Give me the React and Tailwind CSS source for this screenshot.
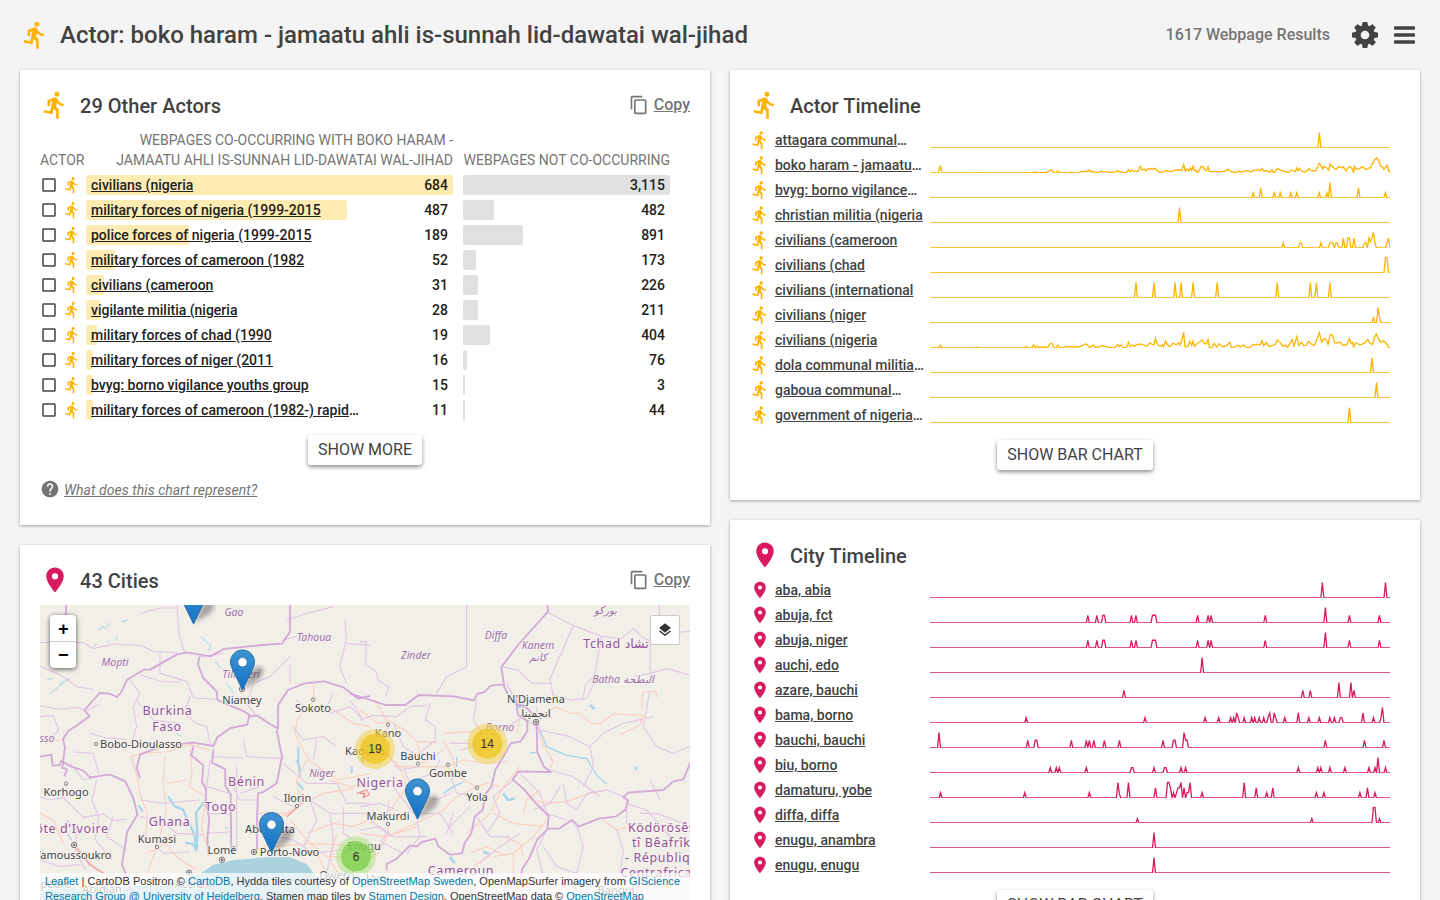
import React from "react";
import {
  MdDirectionsRun,
  MdContentCopy,
  MdHelp,
  MdPlace,
  MdCheckBoxOutlineBlank,
  MdLayers,
} from "react-icons/md";

const ACTORS = [
  ["civilians (nigeria", "684", 367, "3,115", 207],
  ["military forces of nigeria (1999-2015", "487", 261, "482", 31],
  ["police forces of nigeria (1999-2015", "189", 103, "891", 60],
  ["military forces of cameroon (1982", "52", 29, "173", 13],
  ["civilians (cameroon", "31", 18, "226", 15],
  ["vigilante militia (nigeria", "28", 14, "211", 15],
  ["military forces of chad (1990", "19", 11, "404", 27],
  ["military forces of niger (2011", "16", 7, "76", 4],
  ["bvyg: borno vigilance youths group", "15", 7, "3", 2],
  ["military forces of cameroon (1982-) rapid…", "11", 7, "44", 2],
];

// Dense series: x and height in thirds of a pixel.
const BOKO_LINE =
  "0,0 25,1 31,22 36,0 135,0 139,1 143,0 155,0 160,1 165,0 280,0 286,2 295,0 306,0 311,3 315,0 320,3 325,0 330,1 350,2 356,6 364,10 368,6 371,1 377,0 383,6 390,0 405,1 415,0 424,3 432,0 445,0 452,4 464,4 470,6 474,4 478,9 484,3 490,4 500,1 508,3 514,6 520,3 530,4 540,1 550,3 558,4 563,7 567,3 573,4 580,1 590,1 595,10 600,4 605,9 612,5 625,5 631,20 636,9 644,12 648,6 654,12 668,12 676,14 682,6 690,1 " +
  "700,3 708,8 714,5 726,5 738,9 748,9 755,8 761,25 766,6 771,12 776,7 781,15 785,8 789,20 793,7 798,9 802,0 808,8 813,19 818,20 824,10 829,7 834,19 838,5 846,4 858,4 868,3 875,5 883,5 890,9 898,9 905,3 918,1 925,6 935,3 945,7 955,6 962,3 970,8 978,8 985,9 990,6 996,14 1001,6 1010,7 1020,2 1026,9 1030,1 1036,4 1042,14 1052,8 1063,5 1075,1 1084,9 1090,6 1096,4 1100,15 1104,7 1109,14 1116,5 1124,2 1132,8 1137,14 1142,8 1150,6 1158,8 1163,19 1168,29 1174,20 1178,12 1182,20 1190,16 1196,8 1200,27 1206,20 1213,14 1220,12 1226,20 1235,15 1240,19 1248,6 1254,16 1260,20 1268,10 1271,0 1273,20 1280,11 1290,14 1298,19 1308,10 1316,15 1322,16 1327,27 1334,40 1340,45 1346,37 1352,20 1358,18 1362,11 1368,19 1371,24 1374,14 1377,4 1380,8";
const NIGERIA_LINE =
  "0,0 25,0 31,9 36,0 135,0 139,3 145,0 282,0 289,5 295,0 306,0 311,9 316,1 321,6 326,2 335,3 345,3 353,1 359,12 366,14 371,2 378,0 383,9 390,1 400,0 407,5 415,3 425,5 432,1 440,4 447,3 " +
  "460,9 468,13 472,9 478,2 485,5 490,9 495,2 505,3 514,7 525,5 533,3 543,1 553,1 563,10 568,4 573,9 580,1 590,1 595,17 600,5 607,9 614,5 620,10 631,12 640,9 650,5 660,15 667,11 672,10 676,29 681,14 686,7 693,5 697,10 701,4 707,21 711,11 718,5 722,5 728,14 734,12 739,10 745,15 750,9 754,17 761,47 765,4 774,5 779,20 785,8 789,20 793,5 801,13 812,20 816,24 823,14 829,12 834,25 838,2 846,1 852,14 860,3 867,13 875,5 887,5 895,13 900,17 904,1 914,3 923,9 931,4 941,9 950,2 960,1 969,11 977,8 982,12 990,9 996,22 1001,6 1009,16 1017,4 1029,8 1036,11 1042,24 1050,17 1058,6 1067,8 1073,2 1086,25 1092,5 1100,34 1107,8 1114,17 1121,7 1129,8 1136,20 1144,12 1153,8 1161,27 1168,46 1175,18 1183,28 1189,25 1194,11 1201,40 1208,38 1214,16 1222,15 1231,18 1238,9 1250,9 1258,28 1264,13 1268,17 1271,3 1278,15 1288,10 1296,11 1305,16 1313,26 1320,14 1328,10 1333,30 1339,42 1345,28 1353,16 1361,22 1370,12 1375,3 1380,2";

const ABUJA =
  "105:.5 111:.5 115:.5 116:.5 134:.5 137:.5 148:.5 149:.5 150:.5 178:.5 185:.5 187:.5 223:.5 263:1 279:.5 299:.5";

// Sparse series: month index and share of the full height.
const ACTOR_LINES = [
  ["attagara communal", true, "259:1"],
  ["boko haram - jamaatu", true, null, BOKO_LINE],
  ["bvyg: borno vigilance", true, "215:.33 220:.65 229:.33 233:.33 240:.33 244:.33 259:.33 264:.33 266:1 285:.65 303:.33"],
  ["christian militia (nigeria", false, "166:1"],
  ["civilians (cameroon", false, "235:.33 246:.33 247:.33 260:.33 266:.33 267:.33 268:.33 270:.33 271:.33 275:.65 278:.65 279:.65 282:.65 289:.33 290:.33 292:.65 293:.4 294:.65 295:1 296:.35 304:.35 305:.65"],
  ["civilians (chad", false, "303:1 304:1"],
  ["civilians (international", false, "137:1 149:1 163:1 167:1 175:1 191:1 231:1 253:1 257:1 266:1"],
  ["civilians (niger", false, "295:.33 298:1 299:.33"],
  ["civilians (nigeria", false, null, NIGERIA_LINE],
  ["dola communal militia", true, "294:1"],
  ["gaboua communal", true, "297:1"],
  ["government of nigeria", true, "279:1"],
];

const CITY_LINES = [
  ["aba, abia", false, "261:1 303:1"],
  ["abuja, fct", false, ABUJA],
  ["abuja, niger", false, ABUJA],
  ["auchi, edo", false, "181:1"],
  ["azare, bauchi", false, "129:.5 248:.5 253:.5 272:1 280:1 282:.5"],
  ["bama, borno", false, "64:.35 143:.35 183:.35 192:.35 200:.35 202:.35 204:.65 205:.35 209:.35 214:.35 216:.35 219:.35 222:.35 225:.4 226:.65 229:.65 230:.3 236:.35 245:.65 252:.35 259:.35 266:.35 269:.35 273:.35 274:.35 288:.65 295:.35 300:.35 301:1"],
  ["bauchi, bauchi", false, "6:1 65:.5 70:.5 71:.5 94:.5 104:.5 106:.5 109:.5 116:.5 126:.5 155:.5 162:.5 163:.5 169:1 170:.5 171:.5 263:.5 289:.5 302:.5"],
  ["biu, borno", false, "80:.35 84:.35 86:.35 104:.35 134:.35 135:.35 149:.35 156:.35 157:.35 167:.35 170:.35 245:.35 258:.35 260:.35 266:.35 276:.35 292:.35 296:.35 298:1 303:.35"],
  ["damaturu, yobe", false, "7:.35 63:.35 106:.35 125:1 126:.25 132:1 150:.65 158:1 159:1 160:.65 162:.35 164:.35 165:.65 166:.65 167:1 169:.65 171:.35 172:.35 173:1 181:.35 209:1 217:.65 224:.35 228:.65 257:.35 262:.35 286:.35 291:.65 296:.35"],
  ["diffa, diffa", false, "138:.28 254:.28 295:1 296:1 299:.28"],
  ["enugu, anambra", false, "149:1"],
  ["enugu, enugu", false, "149:1"],
];

const SPARK_BASE = 18;
const SPARK_PEAK = 15.5;

function sparsePoints(spec) {
  const values = new Array(307).fill(0);
  spec.split(" ").forEach((pair) => {
    const [i, v] = pair.split(":");
    values[Number(i)] = Number(v);
  });
  return values.map((v, i) => `${((i * 460) / 306).toFixed(2)},${(SPARK_BASE - v * SPARK_PEAK).toFixed(2)}`).join(" ");
}

function densePoints(spec) {
  return spec
    .trim()
    .split(/\s+/)
    .map((pair) => {
      const [x, h] = pair.split(",").map(Number);
      return `${(x / 3).toFixed(2)},${(SPARK_BASE - h / 3).toFixed(2)}`;
    })
    .join(" ");
}

function Sparkline({ sparse, dense, className }) {
  return (
    <svg className={`block h-[18px] w-[460px] shrink-0 overflow-hidden ${className}`} viewBox="0 0 460 18" fill="none">
      <polyline points={sparse ? sparsePoints(sparse) : densePoints(dense)} stroke="currentColor" strokeWidth="1.3" />
    </svg>
  );
}

function Button({ children }) {
  return (
    <button className="h-[30px] rounded-[3px] bg-white px-[10px] text-[16px] leading-[30px] text-[#424242] shadow-[0_2px_4px_rgba(0,0,0,0.45)]">
      {children}
    </button>
  );
}

function Card({ children, className }) {
  return <section className={`bg-white px-5 pt-5 shadow-[0_1px_3px_rgba(0,0,0,0.35)] ${className}`}>{children}</section>;
}

function CardHeader({ icon: Icon, iconClass, title, copy }) {
  return (
    <div className="flex h-[30px] items-center">
      <Icon className={`size-[30px] ${iconClass}`} />
      <h2 className="ml-[10px] flex-1 pt-px text-[20px] font-medium leading-[30px] tracking-[0.02px] text-[#424242]">{title}</h2>
      {copy && (
        <a className="flex items-center gap-[5px] text-[16px] font-medium text-[#757575]">
          <MdContentCopy className="size-5" />
          <span className="underline">Copy</span>
        </a>
      )}
    </div>
  );
}

function Timeline({ rows, icon: Icon, colorClass }) {
  return (
    <div className="mt-[10px] flex flex-col gap-[5px]">
      {rows.map(([name, cut, sparse, dense]) => (
        <div key={name} className="flex h-5 items-start">
          <Icon className={`size-5 shrink-0 ${colorClass}`} />
          <div className="ml-[5px] w-[155px] shrink-0 whitespace-nowrap text-[14px] font-medium leading-5 text-[#424242]">
            <a className="underline">{name}</a>
            {cut && "…"}
          </div>
          <Sparkline sparse={sparse} dense={dense} className={colorClass} />
        </div>
      ))}
    </div>
  );
}

function ActorsCard() {
  return (
    <Card className="h-[455px]">
      <CardHeader icon={MdDirectionsRun} iconClass="text-[#ffb300]" title="29 Other Actors" copy />
      <div className="mt-[10px] flex h-10 items-end text-[14px] leading-5 text-[#757575]">
        <div className="w-[46px]">ACTOR</div>
        <div className="w-[367px] text-right">
          WEBPAGES CO-OCCURRING WITH BOKO HARAM -<br />
          JAMAATU AHLI IS-SUNNAH LID-DAWATAI WAL-JIHAD
        </div>
        <div className="ml-[10px] w-[207px] whitespace-nowrap text-right">WEBPAGES NOT CO-OCCURRING</div>
      </div>
      <div className="mt-[5px] flex flex-col gap-[5px]">
        {ACTORS.map(([name, a, aw, b, bw]) => {
          const cut = name.endsWith("…");
          return (
            <div key={name} className="flex h-5 items-center text-[14px] font-medium leading-5 text-[#212121]">
              <MdCheckBoxOutlineBlank className="size-[18px] text-[#424242]" />
              <MdDirectionsRun className="ml-[5px] mr-[5px] size-[18px] text-[#ffb300]" />
              <div className="grid w-[367px]">
                <div className="col-start-1 row-start-1 h-5 rounded-[2px] bg-[#ffecb3]" style={{ width: aw }} />
                <div className="col-start-1 row-start-1 flex justify-between px-[5px]">
                  <span>
                    <a className="underline">{cut ? name.slice(0, -1) : name}</a>
                    {cut && "…"}
                  </span>
                  <span>{a}</span>
                </div>
              </div>
              <div className="ml-[10px] grid w-[207px]">
                <div className="col-start-1 row-start-1 h-5 rounded-[2px] bg-[#e0e0e0]" style={{ width: bw }} />
                <div className="col-start-1 row-start-1 px-[5px] text-right">{b}</div>
              </div>
            </div>
          );
        })}
      </div>
      <div className="mt-[15px] flex justify-center">
        <Button>SHOW MORE</Button>
      </div>
      <div className="mt-[15px] flex h-5 items-center gap-[4px] text-[#757575]">
        <MdHelp className="mb-[2px] size-5" />
        <a className="text-[14px] italic leading-5 tracking-[0.045px] underline">What does this chart represent?</a>
      </div>
    </Card>
  );
}

function Marker({ x, y }) {
  return (
    <g transform={`translate(${x - 12.5} ${y - 41})`}>
      <path d="M13 40L22 21q6-6 10-3t-3 12z" fill="#000" opacity=".3" filter="url(#soft)" />
      <path
        d="M12.5.5C5.9.5.5 5.9.5 12.500c0 2.400.8 4.800 2 7.300L12.500 40.500l10-20.700c1.200-2.500 2-4.900 2-7.300C24.500 5.900 19.100.5 12.500.5z"
        fill="url(#pin)"
        stroke="#2a6fa8"
      />
      <circle cx="12.5" cy="12.700" r="4.600" fill="#fff" stroke="#2a6fa8" strokeWidth=".6" />
    </g>
  );
}

function Cluster({ x, y, n, outer, inner }) {
  return (
    <g>
      <circle cx={x} cy={y} r="20" fill={outer} fillOpacity=".6" />
      <circle cx={x} cy={y} r="15" fill={inner} fillOpacity=".65" />
      <text x={x} y={y + 4.3} textAnchor="middle" fontSize="12" fill="#333" fontFamily="'Liberation Sans', Arial, sans-serif">
        {n}
      </text>
    </g>
  );
}

// Label: text, x (centre), baseline y, kind, optional anchor.
const LABELS = [
  ["Gao", 194, 11, "r"], ["Tahoua", 274, 35.500, "r"], ["Mopti", 75, 60.500, "r"], ["Tillabéri", 201, 72.500, "r"],
  ["Niger", 282, 172, "r"], ["sso", 7, 137, "r"], ["Zinder", 376, 54, "r"], ["Diffa", 456, 34, "r"],
  ["Kanem", 498, 44, "r"], ["كانم", 498, 56, "r"], ["بوركو", 565, 8.500, "r"], ["Borno", 460, 126, "r"],
  ["Batha البطحة", 583, 77.500, "r"],
  ["Burkina", 127.500, 110, "c"], ["Faso", 127, 125.500, "c"], ["Bénin", 206.500, 180.500, "c"], ["Togo", 180.500, 205.500, "c"],
  ["Ghana", 129.500, 220.500, "c"], ["ôte d'Ivoire", 32, 227.500, "c"], ["Nigeria", 340, 182, "c"],
  ["Tchad تشاد", 576, 43, "c"], ["Cameroun", 421, 270, "c"], ["Ködörösês", 588, 226.500, "c", "start"],
  ["tî Bêafrîka", 592, 242, "c", "start"], ["- République", 585, 257, "c", "start"], ["Centrafricaine", 580.500, 272, "c", "start"],
  ["Niamey", 202, 99, "t"], ["Sokoto", 273, 107, "t"], ["Bobo-Dioulasso", 101, 143, "t"],
  ["Korhogo", 26, 191, "t"], ["Kumasi", 117, 237.500, "t"], ["Yamoussoukro", 33, 253.500, "t"], ["Lomé", 182, 249, "t"],
  ["Porto-Novo", 249.500, 250.500, "t"], ["Abeokuta", 230, 227.500, "t"], ["Ilorin", 257.500, 197, "t"],
  ["Kaduna", 325, 150, "t"], ["Kano", 348, 131.500, "t"], ["Bauchi", 378, 155, "t"], ["Gombe", 408, 172, "t"],
  ["Yola", 437, 195.500, "t"], ["Makurdi", 348, 214.500, "t"], ["Enugu", 324, 244.500, "t"],
  ["N'Djamena", 496, 97.500, "t"], ["انجمينا", 496, 112, "t"], ["Accra", 149, 283, "t"], ["Abidjan", 62, 288, "t"],
  ["Owerri", 297, 274, "t"], ["Uyo", 336, 277, "t"], ["Bangui", 576, 289, "t"], ["pedro", 16, 283, "t"],
];

const LABEL_CLASS = {
  r: "fill-[#9b6fa6] text-[10.5px] italic",
  c: "fill-[#94519b] text-[12.5px] tracking-[0.6px]",
  t: "fill-[#444] text-[11px] tracking-[0.05px]",
};

const TOWNS_WEST = [[198, 432], [108, 551], [381, 741], [849, 299], [801, 618], [998, 478]];
const TOWNS_EAST = [[84, 374], [174, 491], [264, 494], [351, 563], [84, 672]];

function MapDrawing() {
  return (
    <svg className="block h-[340px] w-[650px]" viewBox="0 0 650 340">
      <defs>
        <linearGradient id="pin" x1="0" y1="0" x2="0" y2="1">
          <stop offset="0" stopColor="#3f95d0" />
          <stop offset="1" stopColor="#126fc6" />
        </linearGradient>
        <filter id="soft" x="-40%" y="-40%" width="180%" height="180%">
          <feGaussianBlur stdDeviation="2" />
        </filter>
      </defs>
      <rect width="650" height="340" fill="#f2efe9" />

      {/* western half */}
      <g transform="translate(-10 -5) scale(.33333)" fill="none" strokeLinejoin="round">
        <path
          d="M30 872l80-10 90 14 80-14 110-10 60-10 60-20 40-28 60-14 100-8 70 0 50 20 30 40 20 60 30 20v130H30z"
          fill="#aad3df"
        />
        <g stroke="#a5d5e8" strokeWidth="4">
          <path d="M205 90l12-10 10 6 12-18M230 130l8-8M256 122l6-12M275 66l20-6M190 140l10-8M60 280l40-30M90 250l30-14M50 240l20-6" strokeWidth="3" />
          <path d="M555 185l20 22M512 110l30 26-6 16M590 250l20 30M440 400l14 8" strokeWidth="3" />
          <path d="M805 440v50l6 40M800 480l12 30M965 500v20M800 545l20 25M326 615l12 20" strokeWidth="6" />
          <path d="M415 590l20 30 24 8 14 34 20 40 6 50-10-20-24-4M528 598l-30 40 4 60-2 50" strokeWidth="7" />
          <path d="M105 690l20 30M585 680l6 8" />
        </g>
        <g stroke="#fbd0bf" strokeWidth="3.500">
          <path d="M300 470l50-12 60-2 70-22 60 18M305 470l16 60 10 56 20 50-4 80 34 20M405 470l-6 80 10 80-20 80 50 60 60 40M480 440l6 80-8 40 50 30-14 90 20 70M410 550l60-10M350 760l60-30M380 740l-30 90" />
          <path d="M851 250v50l-50 60-6 40 40 80 90 60 96-20M870 320l40 10 60 40 50 10M830 480l-30 60 14 80M900 540l60 20 60-6M690 640l90 0 40-30 60-30 90-14M800 620l-60 40-40 90M780 660l50 60 60 50 80 0 50-20M830 700l80-30 60 10 50-20M860 760l30 60-10 80M920 700l-20 80 30 50M730 740l110-10 180 10" />
          <path d="M30 640l40 20 30 70M140 740l60 70 40 20M30 420h70" />
        </g>
        <path d="M140 745l40 50 40 24M770 650l30-26M980 580l30-10 8 14-20 10" stroke="#ef9a9f" strokeWidth="4" />
        <g stroke="#e2c8e4" strokeWidth="3.500">
          <path d="M440 15l8 90 16 54M30 128h130l30 18 60-14 80 4 40 18 70 4M330 40l60-16 50 0" />
          <path d="M30 200l60 24 50 36 50 8M30 318l60 10 50-6 30 10 40-20M30 350l40-4 16 44-40 40M300 240l30 40-20 40 10 60-20 60M330 225l60 18 60 4M390 160l0 60 80 24 20 50 70 4M480 290l-20 50 40 30 30 10 10 50M320 300l50 60 80 10M180 400l50 14 60 4" />
          <path d="M130 456l60 4 16 60M120 490l40 50 40-10M30 590l30 10 40-8 60 60 60-10 30 20 40-4M200 540l-14 60 20 50-10 70 50 60M110 660l30 30-4 60 30 60M30 780l60 20 60-6M250 650l-20 60 60 40" />
          <path d="M510 170l70-10M760 120l40-10M770 60l60-20 80-20M945 60l4 60-20 80 20 50M780 170l-60 60-50 20-20 60 30 40M950 130l70 6M780 190l0 60M640 420l10 50 110 6M550 470l90 4" />
          <path d="M330 600l70 10 110-10M330 650l60 10 50 40 80 4M340 700l60 60 80-4M540 480l-10 80M610 560l20 40 50 0M690 560l-60 20M690 640l50 50M530 560l70 20M535 640l65 4M530 700l70-4M620 500l0 260M790 380l30 40 60-10 40 30M760 490l70 60 90 0 30 60 70 0M730 590l60 30 50-20 60 40 120 0M840 600l20 60-40 80M900 640l10 80-20 100M940 620l0 80 60 40M700 700l90 20 60 40 80-10 90 30M860 420l-10 60M900 340l60-20 40 40M800 300l30 30 60-10 20-40M960 300l40 60" />
        </g>
        <g stroke="#d3a9d7" strokeWidth="5.500">
          <path d="M780 15l0 80-24 36-60 4-115 12-40 22-70-12-30 6-80 46-20 0-50 30-16 36-14 16-22-10-30-2-46 52 16 18-40 28-24 16-16 24 6 26-8 60 14 6-8 20" />
          <path d="M30 470l34-6 4 32 20 0 6-14 26 16 40 14 20 20 60-8 46 20 24 50 12 50-30 50-16 100 20 50 10 40" />
          <path d="M508 170l-4 24 16 40 40 40 2 26 46 20 30 12 20 12-6 30-50 10-40 28-12 26-60-10-60 6-60 14-40 16-10 40 10 30M490 440l-6 26 36 30-4 50 12 20 0 50 10 40-6 60 4 50M550 448l-4 40 40 20 0 50 16 24 2 170M660 350l20-4 40 26 24 14 0-70 30-46 50-20 60-6 56 18 44 34 36-8M740 390l16 80-16 80-40 26-16 4-4 110 2 60" />
          <path d="M108 15v30" />
        </g>
        <g stroke="#777" strokeWidth="3" fill="#f6f3ee">
          {TOWNS_WEST.map(([x, y]) => (
            <circle key={x} cx={x} cy={y} r="5" />
          ))}
          {[[132, 735], [576, 779], [672, 756], [636, 267], [477, 818]].map(([x, y]) => (
            <g key={x}>
              <circle cx={x} cy={y} r="8" />
              <circle cx={x} cy={y} r="3" fill="#777" />
            </g>
          ))}
        </g>
      </g>

      {/* eastern half */}
      <g transform="translate(320 -5) scale(.33333)" fill="none" strokeLinejoin="round">
        <g stroke="#a5d5e8" strokeWidth="4">
          <path d="M430 580l14 20 20-4M370 755l20 8M690 315l14 12M828 500v10M460 300l16 20 20-6M270 770l14 20" strokeWidth="8" />
          <path d="M250 580l30-20 30-14M540 390l20 50 60 26 60 10 30 50 30 26M290 470v30M510 458h20" />
        </g>
        <g stroke="#fbd0bf" strokeWidth="3.500">
          <path d="M0 330l50 40 40-6 50 30 30 30 60 4M45 300l40 70-20 80-60 40M60 440l60 60 20 60-50 70-60 40M100 500l160 0 50-20 70 10 60-6M250 400l90-6M170 430l20 60 60-40M260 500l50 40 40 20-60 30-40 40-60 30-90 40M250 420l30 60 10 50M350 560l30-10 40 10M480 500l-50 60-40 80-70 60M470 400l10-50 30 4M530 365l20 70 30 50-10 20M530 350l60-30 40 20 30 0 30 28 30 4 40-30 90 4M845 330l4-54 40-2 0 20M850 345l-10 30-60 30" />
          <path d="M400 640l60 30 90 10M490 640l10-40 40-30M510 600l60 10 50-6 60-20 60-14M560 660l-40 50-60 50-60 10M430 710l50 20 10 40M460 760l0 60 40 10M330 760l50-20 60 30M390 760l-60 50M0 700l80 10 90-30M85 600v100l-30 60-50 30M730 660l40 30 40-10" />
        </g>
        <path d="M0 580l14 0-4 14" stroke="#ef8080" strokeWidth="4" />
        <g stroke="#e2c8e4" strokeWidth="3.500">
          <path d="M320 15v185l-60 30-30 50M0 125l20 0-4 70 30 16 10 30 30 20-10 30M560 35l80 42 85 32-15 80-6 40-28 24-8 50M640 77l-40 90-30 70 10 50 60 14M425 200l50 10 40 40 60 0M440 250l20 40 40 20M725 109l60 6 36-30 30 30 20 6 0 100M871 140l0 80-50 10M871 220l50-14 70 20M898 15v32M710 235l-30 60-40 4M920 100l70-6" />
          <path d="M0 360l40-14 70 4 40-30 50-4M350 300l-10 60 30 50-30 30-40 10M210 310l-14 50 30 20 0 40-50 40M270 430l60 0 50 30M100 370l30 70 50 30M240 480l-20 40-60 20M0 420l60 20 60 70 60-10M130 500l30 80 70 20 40-20M270 520l20 60 60 10M100 560l60 80 80 0 40 60M0 620l60-10 50 20M170 650l10 60-40 50M30 660l50 40-40 60M0 690l60-10 40 30 100 0M330 620l-60 60M280 640l-20 60M20 750l50-20 60 30" />
          <path d="M440 380l50-30 50 40 90 20 60 30 10 60-30 60M540 400l-10-80M690 440l40-40 60-30 90-20M870 270l-20 110 40 60 50 20 50-20M790 590l-50-20-60 10-30 50-30-20-10-60M480 520l60 60 20 60 60 20M600 560l-30 50-50 20M460 540l-60 50 20 50-40 60M570 510l70 20 80 60M800 600l0 70 30 30M800 610l60 20 80 90M840 640l50 0 80 30M650 680l20 60-20 80-60-20-40-60M770 690l20 60-10 70M870 540l30 60M560 690l-30 60 20 80M480 700l-60 40-60 50M350 650l40 60 60 0" />
        </g>
        <g stroke="#d3a9d7" strokeWidth="5.500">
          <path d="M562 15l2 20-90 100-30 40-20 26 8 52-40 4-20 20-20 4-10 20-60-12-106-4-40 30-60 0-60-20-46-14" />
          <path d="M430 254l14 30 24 16 6 44 28 20 0 30-20 30-30 6-16 30-30 50-12 50-16 20-10 50-24 20-10 50-20 30-8 30-36 4-36-26-8-22-40 10-16 14-20-4-40 40-30 16 0 20" />
          <path d="M530 366l2 90 20 44 20 16-96-2-18 24 34 30 34 40 40 40-4 40-30 30-26 60-20 30-4 30M566 686l30 0 40-26 20 20 60-24 50-6 30-20 8-30-14-8 14-14 106-8 30-26 30-6 30-70" />
          <path d="M470 310l30 14 20 20" />
        </g>
        <g stroke="#777" strokeWidth="3" fill="#f6f3ee">
          {TOWNS_EAST.map(([x, y]) => (
            <circle key={`${x}-${y}`} cx={x} cy={y} r="5" />
          ))}
          <circle cx="528" cy="366" r="8" />
          <circle cx="528" cy="366" r="3" fill="#777" />
        </g>
      </g>

      <g fontFamily="'Noto Sans', 'DejaVu Sans', sans-serif" stroke="#f6f3ee" strokeWidth="2" paintOrder="stroke">
        {LABELS.map(([text, x, y, kind, anchor]) => (
          <text key={text} x={x} y={y} textAnchor={anchor || "middle"} className={LABEL_CLASS[kind]}>
            {text}
          </text>
        ))}
      </g>

      <Cluster x={335} y={144} n="19" outer="#f1d357" inner="#f0c20c" />
      <Cluster x={447.300} y={138.700} n="14" outer="#f1d357" inner="#f0c20c" />
      <Cluster x={316} y={251.300} n="6" outer="#b5e28c" inner="#6ecc39" />
      <Marker x={153.500} y={19.500} />
      <Marker x={202.500} y={85.500} />
      <Marker x={231.500} y={248} />
      <Marker x={377.500} y={214.500} />
    </svg>
  );
}

function MapLink({ children }) {
  return <a className="text-[#0078a8]">{children}</a>;
}

function CitiesCard() {
  return (
    <Card className="h-[480px]">
      <CardHeader icon={MdPlace} iconClass="text-[#d81b60]" title="43 Cities" copy />
      <div className="relative mt-[10px] h-[340px] overflow-hidden">
        <MapDrawing />
        <div className="absolute left-[10px] top-[10px] flex w-[26px] flex-col rounded-[4px] bg-white pl-px text-center font-['Liberation_Mono'] text-[18px] font-bold leading-[26px] text-black shadow-[0_1px_5px_rgba(0,0,0,0.65)]">
          <span className="-ml-px h-[27px] border-b border-[#ccc] pl-px leading-[30px]">+</span>
          <span className="h-[26px] leading-[29px]">−</span>
        </div>
        <div className="absolute right-[10px] top-[10px] flex size-[30px] items-center justify-center rounded-[2px] border border-[#ccc] bg-white text-[#333]">
          <MdLayers className="size-4" />
        </div>
        <div className="absolute left-0 top-[268px] w-full whitespace-nowrap bg-white/70 px-[5px] pt-[0.6px] font-['Liberation_Sans'] text-[11px] leading-[15.7px] text-[#333]">
          <span className="tracking-[0.039px]">
            <MapLink>Leaflet</MapLink> | CartoDB Positron © <MapLink>CartoDB</MapLink>, Hydda tiles courtesy of{" "}
            <MapLink>OpenStreetMap Sweden</MapLink>, OpenMapSurfer imagery from <MapLink>GIScience</MapLink>
          </span>
          <br />
          <MapLink>Research Group @ University of Heidelberg</MapLink>, Stamen map tiles by{" "}
          <MapLink>Stamen Design</MapLink>, OpenStreetMap data © <MapLink>OpenStreetMap</MapLink>
        </div>
      </div>
    </Card>
  );
}

function GearIcon() {
  return (
    <svg className="size-[26px]" viewBox="0 128 1536 1536" fill="currentColor">
      <path d="M1024 896q0-106-75-181t-181-75-181 75-75 181 75 181 181 75 181-75 75-181zm512-109v222q0 12-8 23t-20 13l-185 28q-19 54-39 91 35 50 107 138 10 12 10 25t-9 23q-27 37-99 108t-94 71q-12 0-26-9l-138-108q-44 23-91 38-16 136-29 186-7 28-36 28h-222q-14 0-24.500-8.500t-11.500-21.500l-28-184q-49-16-90-37l-141 107q-10 9-25 9-14 0-25-11-126-114-165-168-7-10-7-23 0-12 8-23 15-21 51-66.500t54-70.500q-27-50-41-99l-183-27q-13-2-21-12.500t-8-23.500v-222q0-12 8-23t19-13l186-28q14-46 39-92-40-57-107-138-10-12-10-24 0-10 9-23 26-36 98.500-107.500t94.500-71.500q13 0 26 10l138 107q44-23 91-38 16-136 29-186 7-28 36-28h222q14 0 24.500 8.500t11.500 21.500l28 184q49 16 90 37l142-107q9-9 24-9 13 0 25 10 129 119 165 170 7 8 7 22 0 12-8 23-15 21-51 66.500t-54 70.500q26 50 41 98l183 28q13 2 21 12.500t8 23.500z" />
    </svg>
  );
}

function BarsIcon() {
  return (
    <svg className="h-[18px] w-[21px]" viewBox="0 0 21 18" fill="currentColor">
      <rect y="0.3" width="21" height="3.500" rx="1" />
      <rect y="7.300" width="21" height="3.500" rx="1" />
      <rect y="14.300" width="21" height="3.500" rx="1" />
    </svg>
  );
}

export default function App() {
  return (
    <div className="h-[900px] w-[1440px] overflow-hidden bg-[#f4f4f4] font-['Roboto',sans-serif]">
      <header className="flex h-[70px] items-center px-5 text-[#424242]">
        <MdDirectionsRun className="size-[30px] text-[#ffb300]" />
        <h1 className="ml-[10px] flex-1 text-[24px] font-medium leading-[30px]">
          Actor: boko haram - jamaatu ahli is-sunnah lid-dawatai wal-jihad
        </h1>
        <span className="mr-[22px] text-[16px] font-medium text-[#757575]">1617 Webpage Results</span>
        <GearIcon />
        <div className="ml-4 mr-[5px]">
          <BarsIcon />
        </div>
      </header>
      <main className="flex items-start gap-5 px-5">
        <div className="flex w-[690px] flex-col gap-5">
          <ActorsCard />
          <CitiesCard />
        </div>
        <div className="flex w-[690px] flex-col gap-5">
          <Card className="h-[430px]">
            <CardHeader icon={MdDirectionsRun} iconClass="text-[#ffb300]" title="Actor Timeline" />
            <Timeline rows={ACTOR_LINES} icon={MdDirectionsRun} colorClass="text-[#ffb300]" />
            <div className="mt-[15px] flex justify-center">
              <Button>SHOW BAR CHART</Button>
            </div>
          </Card>
          <Card className="h-[430px]">
            <CardHeader icon={MdPlace} iconClass="text-[#d81b60]" title="City Timeline" />
            <Timeline rows={CITY_LINES} icon={MdPlace} colorClass="text-[#d81b60]" />
            <div className="mt-[15px] flex justify-center">
              <Button>SHOW BAR CHART</Button>
            </div>
          </Card>
        </div>
      </main>
    </div>
  );
}
